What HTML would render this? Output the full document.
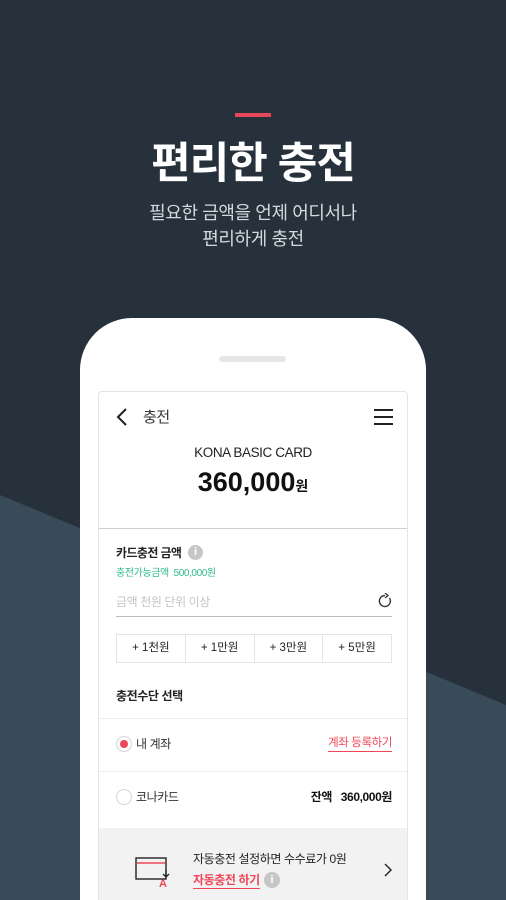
<!DOCTYPE html>
<html><head><meta charset="utf-8"><style>
*{margin:0;padding:0;box-sizing:border-box}
html,body{width:506px;height:900px;overflow:hidden}
body{background:#26313c;position:relative;font-family:"Liberation Sans","Noto Sans CJK KR",sans-serif}
.a{position:absolute}
.t{white-space:nowrap;letter-spacing:-0.4px}
</style></head><body>
<svg class="a" style="left:0;top:0" width="506" height="900"><polygon points="0,495 506,705 506,900 0,900" fill="#394a59"/></svg>
<div class="a" style="left:235px;top:113px;width:36px;height:4px;background:#e8475a"></div>
<div class="a t" style="left:0;width:506px;top:136px;text-align:center;color:#fff;font-size:43px;font-weight:bold;line-height:56px;letter-spacing:-1px">편리한 충전</div>
<div class="a t" style="left:0;width:506px;top:200px;text-align:center;color:#d5d9dd;font-size:18px;line-height:26px">필요한 금액을 언제 어디서나<br>편리하게 충전</div>
<div class="a" style="left:80px;top:318px;width:346px;height:582px;background:#fff;border-radius:52px 52px 0 0"></div>
<div class="a" style="left:219px;top:356px;width:67px;height:6px;border-radius:3px;background:#e6e6e6"></div>
<div class="a" style="left:98px;top:391px;width:310px;height:520px;border:1px solid #e4e4e4;border-radius:4px;background:#fff"></div>
<svg class="a" style="left:114px;top:406px" width="16" height="24"><path d="M12 3 L4 11 L12 19" stroke="#222" stroke-width="2" fill="none"/></svg>
<div class="a t" style="left:143px;top:407px;font-size:15px;color:#333;line-height:22px">충전</div>
<svg class="a" style="left:374px;top:408px" width="20" height="18"><path d="M0 2H19M0 9H19M0 16H19" stroke="#222" stroke-width="2"/></svg>
<div class="a t" style="left:98px;width:310px;top:444px;text-align:center;font-size:13.5px;color:#222;line-height:18px">KONA BASIC CARD</div>
<div class="a t" style="left:98px;width:310px;top:464px;text-align:center;font-size:27px;font-weight:bold;color:#111;line-height:36px;letter-spacing:0">360,000<span style="font-size:14px">원</span></div>
<div class="a" style="left:99px;top:528px;width:308px;height:1px;background:#cfcfcf"></div>
<div class="a t" style="left:116px;top:544px;font-size:12px;font-weight:bold;color:#222;line-height:18px;letter-spacing:-0.6px">카드충전 금액</div>
<div class="a" style="left:188px;top:545px;width:15px;height:15px;border-radius:50%;background:#c6c6c6;color:#fff;font-size:11px;font-weight:bold;text-align:center;line-height:15px">i</div>
<div class="a t" style="left:116px;top:567px;font-size:10px;color:#2dbb8c;line-height:14px">충전가능금액&nbsp; 500,000원</div>
<div class="a t" style="left:116px;top:593px;font-size:12px;color:#c4c4c4;line-height:18px">금액 천원 단위 이상</div>
<svg class="a" style="left:377px;top:593px" width="16" height="16"><path d="M12.5 5 A5.5 5.5 0 1 1 8 2.5" stroke="#333" stroke-width="1.4" fill="none"/><path d="M8 0 L11 2.5 L8 5" stroke="#333" stroke-width="1.3" fill="none"/></svg>
<div class="a" style="left:116px;top:616px;width:276px;height:1px;background:#bbb"></div>
<div class="a" style="left:116px;top:634px;width:276px;height:29px;border:1px solid #e4e4e4;display:flex">
<div style="flex:1;border-right:1px solid #e4e4e4;text-align:center;font-size:11.5px;line-height:27px;color:#222">+ 1천원</div>
<div style="flex:1;border-right:1px solid #e4e4e4;text-align:center;font-size:11.5px;line-height:27px;color:#222">+ 1만원</div>
<div style="flex:1;border-right:1px solid #e4e4e4;text-align:center;font-size:11.5px;line-height:27px;color:#222">+ 3만원</div>
<div style="flex:1;text-align:center;font-size:11.5px;line-height:27px;color:#222">+ 5만원</div></div>
<div class="a t" style="left:116px;top:687px;font-size:12px;font-weight:bold;color:#222;line-height:18px">충전수단 선택</div>
<div class="a" style="left:99px;top:718px;width:308px;height:1px;background:#ececec"></div>
<div class="a" style="left:116px;top:736px;width:16px;height:16px;border-radius:50%;border:1px solid #d4d4d4"></div>
<div class="a" style="left:120px;top:740px;width:8px;height:8px;border-radius:50%;background:#f0465a"></div>
<div class="a t" style="left:136px;top:735px;font-size:12px;color:#333;line-height:18px">내 계좌</div>
<div class="a t" style="right:114px;top:735px;font-size:11.5px;color:#f0465a;line-height:16px;border-bottom:1px solid #f0465a">계좌 등록하기</div>
<div class="a" style="left:99px;top:771px;width:308px;height:1px;background:#ececec"></div>
<div class="a" style="left:116px;top:789px;width:16px;height:16px;border-radius:50%;border:1px solid #d4d4d4"></div>
<div class="a t" style="left:136px;top:788px;font-size:12px;color:#333;line-height:18px">코나카드</div>
<div class="a t" style="right:114px;top:788px;font-size:12px;font-weight:bold;color:#111;line-height:18px">잔액&nbsp;&nbsp; 360,000원</div>
<div class="a" style="left:99px;top:828px;width:308px;height:72px;background:#f2f2f2"></div>
<svg class="a" style="left:134px;top:856px" width="40" height="32"><rect x="2" y="2" width="30" height="21" fill="none" stroke="#222" stroke-width="1.4"/><path d="M3 7H31" stroke="#f0465a" stroke-width="1.4"/><path d="M32 14V21M29 18L32 21L35 18" stroke="#222" stroke-width="1.3" fill="none"/><text x="25" y="31" font-size="11" font-weight="bold" fill="#f0465a" font-family="Liberation Sans">A</text></svg>
<div class="a t" style="left:193px;top:850px;font-size:12px;color:#222;line-height:18px">자동충전 설정하면 수수료가 0원</div>
<div class="a t" style="left:193px;top:872px;font-size:12px;font-weight:bold;color:#f0465a;line-height:16px;border-bottom:1px solid #f0465a">자동충전 하기</div>
<div class="a" style="left:264px;top:872px;width:16px;height:16px;border-radius:50%;background:#c6c6c6;color:#fff;font-size:11px;font-weight:bold;text-align:center;line-height:16px">i</div>
<svg class="a" style="left:383px;top:862px" width="10" height="16"><path d="M2 2L8 8L2 14" stroke="#222" stroke-width="1.4" fill="none"/></svg>
</body></html>
